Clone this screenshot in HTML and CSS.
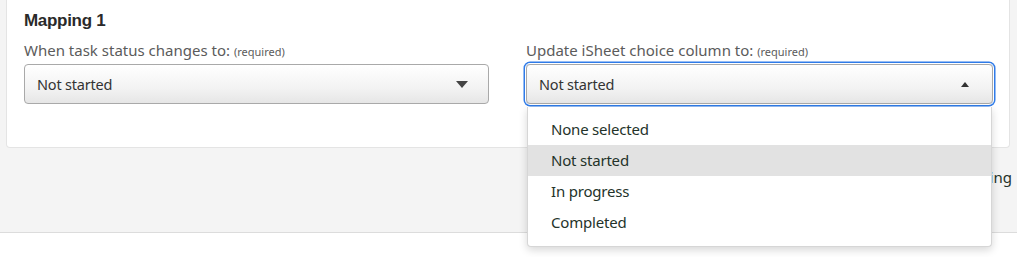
FILE: index.html
```html
<!DOCTYPE html>
<html>
<head>
<meta charset="utf-8">
<link rel="stylesheet" href="styles.css">
</head>
<body>
<div class="page">
  <div class="card">
    <h3 class="title">Mapping 1</h3>
    <div class="fields">
      <div class="field">
        <label class="label">When task status changes to: <small>(required)</small></label>
        <div class="select">
          <span>Not started</span>
          <svg class="caret" width="12" height="7" viewBox="0 0 12 7"><path d="M0 0H12L6 7Z" fill="#444"/></svg>
        </div>
      </div>
      <div class="field">
        <label class="label">Update iSheet choice column to: <small>(required)</small></label>
        <div class="select focused">
          <span>Not started</span>
          <svg class="caret" width="8" height="5" viewBox="0 0 8 5"><path d="M0 5H8L4 0Z" fill="#333"/></svg>
        </div>
        <ul class="menu">
          <li>None selected</li>
          <li class="active">Not started</li>
          <li>In progress</li>
          <li>Completed</li>
        </ul>
      </div>
    </div>
  </div>
  <div class="footer"><span>Loading</span></div>
</div>
<div class="below"></div>
</body>
</html>
```

FILE: styles.css
```css
* { box-sizing: border-box; }
html, body { margin: 0; padding: 0; background: #fff; }
body { font-family: "Source Sans Pro", "Noto Sans", "Open Sans", sans-serif; }
.page {
  background: #f4f4f4;
  height: 233px;
  border-bottom: 1px solid #dcdcdc;
  padding: 0 5px 0 6px;
}
.below { height: 24px; background: #fff; }
.card {
  background: #fff;
  border: 1px solid #e4e4e4;
  border-top: none;
  border-radius: 0 0 4px 4px;
  height: 148px;
  margin-right: 2px;
  padding: 10px 16px 0 17px;
}
.title {
  margin: 0;
  font-family: "Liberation Sans", Arial, sans-serif;
  font-weight: bold;
  font-size: 17px;
  letter-spacing: -0.3px;
  color: #2a2a2a;
  line-height: 21px;
}
.fields {
  display: grid;
  grid-template-columns: 465px 467px;
  column-gap: 37px;
  margin-top: 10px;
}
.field { position: relative; }
.label {
  display: block;
  font-size: 15px;
  color: #5b5b5b;
  line-height: 19px;
  margin-bottom: 3px;
}
.label small { font-size: 11px; }
.select {
  height: 40px;
  border: 1px solid #a9a9a9;
  border-radius: 4px;
  background: linear-gradient(#ffffff, #f3f3f3 60%, #e6e6e6);
  display: flex;
  align-items: center;
  justify-content: space-between;
  padding: 0 20px 0 12px;
  font-size: 14.5px;
  color: #333;
  letter-spacing: -0.2px;
}
.select.focused {
  box-shadow: 0 0 0 1px #fff, 0 0 0 2.5px #2f7be8;
  padding-right: 23px;
}
.menu {
  position: absolute;
  top: 66px;
  left: 1px;
  width: 465px;
  margin: 0;
  padding: 7px 0 8px;
  list-style: none;
  background: #fff;
  border: 1px solid #d6d6d6;
  border-top: none;
  border-radius: 0 0 4px 4px;
  box-shadow: 0 3px 8px rgba(0,0,0,0.16);
  z-index: 10;
}
.menu li {
  height: 31px;
  line-height: 31px;
  padding-left: 23px;
  font-size: 15px;
  color: #24332a;
  letter-spacing: -0.2px;
}
.menu li.active { background: #e2e2e2; }
.footer {
  display: flex;
  justify-content: flex-end;
  padding-top: 19px;
  font-size: 15px;
  color: #24332a;
  line-height: 20px;
}
```
